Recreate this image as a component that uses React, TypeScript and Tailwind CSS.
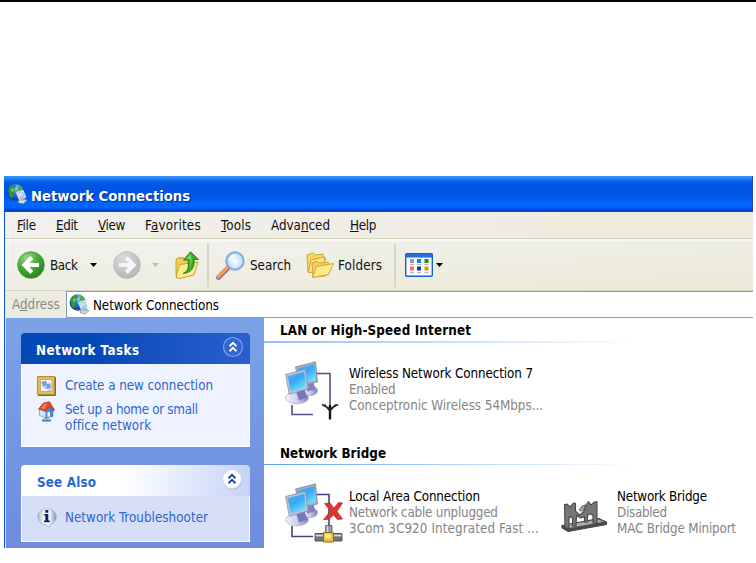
import React from "react";

function Globe({ className, id }: { className: string; id: string }) {
  return (
    <svg viewBox="0 0 21 21" className={className}>
      <defs>
        <radialGradient id={id} cx="0.6" cy="0.25" r="0.85">
          <stop offset="0" stopColor="#9fd4fa" />
          <stop offset="0.45" stopColor="#2c6fd2" />
          <stop offset="1" stopColor="#0a2c86" />
        </radialGradient>
      </defs>
      <circle cx="8.800" cy="8.500" r="8.200" fill={`url(#${id})`} />
      <path d="M1.500 5 4 1.800 8 .8l1.500 2L7 4.500 7.500 7 5.500 8.500 6.500 11 5 14.500 2.500 12z" fill="#2f9e2c" />
      <path d="M11 1.500l3.500 1.800L16.500 7l-2.500 1.500L11.500 7l-1-2.500z" fill="#46b238" />
      <path d="M4 5.500l2-1 .5 2L5 8z" fill="#8ee06b" />
      <path d="M9.500 8.500 16 6.500 18.800 13 12.500 16z" fill="#a5c8ee" stroke="#e3edf8" strokeWidth="1" />
      <path d="M11 9.800l4-1.300 1 2.500-4 2z" fill="#cfe5fa" />
      <path d="M11 17l5-2.500 4 2-3.500 3.300-5-.8z" fill="#cdd6e4" stroke="#6d7d99" strokeWidth=".6" />
      <path d="M14 16.500l4-2.500.5 2.500z" fill="#9aa9c2" />
    </svg>
  );
}

function RoundArrow({ forward }: { forward?: boolean }) {
  return (
    <svg viewBox="0 0 28 28" className="size-7 shrink-0">
      <defs>
        <radialGradient id={forward ? "fwd" : "back"} cx="0.35" cy="0.25" r="0.85">
          <stop offset="0" stopColor={forward ? "#dcdcdc" : "#9ed889"} />
          <stop offset="0.45" stopColor={forward ? "#c9c9c9" : "#4cae38"} />
          <stop offset="1" stopColor={forward ? "#b3b3b3" : "#1d7a14"} />
        </radialGradient>
      </defs>
      <circle cx="14" cy="14" r="13.300" fill={forward ? "url(#fwd)" : "url(#back)"} stroke={forward ? "#b8b8b4" : "#4c9a3e"} strokeWidth=".8" />
      <path
        d={forward ? "M6 14h14M13.200 6.500l7.300 7.500-7.300 7.500" : "M22 14H8M14.800 6.500 7.500 14l7.300 7.500"}
        fill="none"
        stroke={forward ? "#f6f6f6" : "#fff"}
        strokeWidth="4"
      />
    </svg>
  );
}

function Caret({ className }: { className: string }) {
  return (
    <svg viewBox="0 0 7 4" className={`h-1 w-[7px] shrink-0 ${className}`}>
      <path d="M0 0h7L3.500 4z" fill="currentColor" />
    </svg>
  );
}

function UpFolder() {
  return (
    <svg viewBox="0 0 24 28" className="h-7 w-6 shrink-0">
      <path d="M1 9l1.500-2 6-.5 1.500 2h8v15H1z" fill="#f1cf55" stroke="#c99d2a" />
      <path d="M1 26.500 4.500 13.500 23 11l-4 13-14 3.500z" fill="#fdeb93" stroke="#d0a12d" />
      <path d="M8 22.500c5-2 6-6 5-13.500H8.500L15.500.8 23.500 8.500H19c1 8-3 13.500-11 14z" fill="#3aad2b" stroke="#1c7a17" strokeWidth=".9" />
      <path d="M15.500 3 11 8h4c1 4 0 8-1.500 10.500C16 15 17 12 16.500 7z" fill="#7bd862" />
    </svg>
  );
}

function SearchGlass() {
  return (
    <svg viewBox="0 0 29 29" className="size-[29px] shrink-0">
      <defs>
        <radialGradient id="lens" cx="0.5" cy="0.5" r="0.55">
          <stop offset="0" stopColor="#fff" />
          <stop offset="0.6" stopColor="#cdeafc" />
          <stop offset="1" stopColor="#8cc8f5" />
        </radialGradient>
      </defs>
      <path d="M2.500 26.500 12 17" stroke="#957583" strokeWidth="4.800" strokeLinecap="round" />
      <path d="M2.300 25.600 11.500 16.500" stroke="#f59d55" strokeWidth="3" strokeLinecap="round" />
      <circle cx="19" cy="10" r="8.800" fill="url(#lens)" stroke="#86a6dc" strokeWidth="1.800" />
      <path d="M13.500 9c1-3 3-4.500 6-4.500" stroke="#fff" strokeWidth="1.500" fill="none" />
    </svg>
  );
}

function Folders() {
  return (
    <svg viewBox="0 0 28 26" className="h-[26px] w-7 shrink-0">
      <g stroke="#d3a433" strokeWidth="1" strokeLinejoin="round">
        <path d="M1 3 7 1l2 2 8-1v4l3 1-7 12-11 1.500z" fill="#f5d564" />
        <path d="M2.500 20.500 5 8l14-3-2 14z" fill="#fce98f" />
        <path d="M6 11l5-2 2 2 9-1 1 4-3 10-13 1z" fill="#f3cf58" />
        <path d="M6.500 25.500 10.500 14.500 27.500 11.500 22.500 22.500z" fill="#fdea8c" />
      </g>
    </svg>
  );
}

function ViewsIcon() {
  return (
    <svg viewBox="0 0 28 24" className="h-6 w-7 shrink-0">
      <rect x=".7" y=".7" width="26.600" height="22.600" rx="1" fill="#fbfcff" stroke="#1763c9" strokeWidth="1.400" />
      <path d="M1 1h26v3.500H1z" fill="#1c6fe0" />
      <path d="M5 6h4v4H5z" fill="#9b8fd0" />
      <path d="M12 6h4v4h-4z" fill="#1683e0" />
      <path d="M19.500 6h4v4h-4z" fill="#14980f" />
      <path d="M5 13.500h4v4H5z" fill="#ff7345" />
      <path d="M12 13.500h4v4h-4z" fill="#0a3aa8" />
      <path d="M19.500 13.500h4v4h-4z" fill="#d19a05" />
      <path d="M5 11.500h4m3 0h4m3.500 0h4M5 19.500h4m3 0h4m3.500 0h4" stroke="#b5b5b5" />
    </svg>
  );
}

function Chevrons({ light }: { light?: boolean }) {
  return (
    <svg viewBox="0 0 22 22" className="mb-[3px] size-[22px] shrink-0">
      {light && <circle cx="11.500" cy="11.800" r="9.800" fill="#8f9fce" opacity=".6" />}
      <circle cx="11" cy="11" r="9.500" fill={light ? "#fff" : "#3566cd"} stroke={light ? "#d5daec" : "#7ba3ea"} strokeWidth="1.200" />
      <path d="M7.500 10.200 11 6.800l3.500 3.400M7.500 15.200 11 11.800l3.500 3.400" fill="none" stroke={light ? "#1b45a5" : "#fff"} strokeWidth="1.900" />
    </svg>
  );
}

function NewConnectionIcon() {
  return (
    <svg viewBox="0 0 19 20" className="h-5 w-[19px] shrink-0">
      <path d="M.5.5h17v18H.5z" fill="#e3bb55" stroke="#b08c3f" />
      <path d="M18.500 1v18.500H1" stroke="#8a6a2c" fill="none" />
      <path d="M3.500 3.500h11.500v12H3.500z" fill="#f5f8ff" stroke="#d3ad55" />
      <path d="M4.800 6l4-1.300 1.200 4.500-4 1.300zM9 8.500l4-1 1 4.500-4 1z" fill="#5aa9ea" stroke="#93a9d0" strokeWidth=".7" />
      <path d="M6 12l3.500-1v2zM10 14.500l3.500-1V15z" fill="#9fb0d2" />
    </svg>
  );
}

function HomeIcon() {
  return (
    <svg viewBox="0 0 17 21" className="h-[21px] w-[17px] shrink-0">
      <path d="M1.500 8.500 9 4l6 5v6.500L8 17l-6.500-2.500z" fill="#d5e5f8" stroke="#7d9ccc" strokeWidth=".8" />
      <path d="M7.500 9.500 11.500 5l3.500 4.500v6L7.500 17z" fill="#4389d8" />
      <path d="M9.500 11h2.500v4.800H9.500z" fill="#f2f7ff" />
      <path d="M.5 8 5.500 2 11.500.8 16.500 9 15 10 11.500 5 7.500 10.500z" fill="#d8502c" stroke="#933020" strokeWidth=".7" />
      <path d="M3 7 6.500 3l3-.8L6.500 8z" fill="#f0805c" />
      <path d="M8 16.500v2.500M4 19.500h9" stroke="#697582" strokeWidth="2" />
      <path d="M6 18h5" stroke="#a4afb8" strokeWidth="2" />
    </svg>
  );
}

function InfoIcon() {
  return (
    <svg viewBox="0 0 20 20" className="size-5 shrink-0">
      <defs>
        <linearGradient id="bubble" x1="0" x2="1">
          <stop offset="0" stopColor="#a8bbd2" />
          <stop offset=".4" stopColor="#fff" />
          <stop offset=".65" stopColor="#eef5fb" />
          <stop offset="1" stopColor="#6f97bd" />
        </linearGradient>
      </defs>
      <path d="M10 .8c5.500 0 9.200 3.500 9.200 8 0 3.800-2.700 6.700-6.200 7.700l-.8 3-3.200-2.800C4 16.500.8 13 .8 8.800c0-4.500 3.700-8 9.200-8z" fill="url(#bubble)" stroke="#9db2c9" strokeWidth=".8" />
      <path d="M8.300 2h3v2.700h-3zM7.300 6h4v6.500h1.500v1.800H7v-1.800h1.300V7.800h-1z" fill="#15206e" />
    </svg>
  );
}

function Monitors({ id }: { id: string }) {
  return (
    <g>
      <defs>
        <linearGradient id={`${id}s`} x1="0" y1="0" x2=".6" y2="1">
          <stop offset="0" stopColor="#5ba8ee" />
          <stop offset=".5" stopColor="#35aaf8" />
          <stop offset="1" stopColor="#6be0ff" />
        </linearGradient>
        <linearGradient id={`${id}b`} x1="0" x2="1">
          <stop offset="0" stopColor="#f3f3fb" />
          <stop offset=".5" stopColor="#cfcfea" />
          <stop offset="1" stopColor="#7f7ebb" />
        </linearGradient>
      </defs>
      <ellipse cx="24.500" cy="29.500" rx="8" ry="5.300" fill={`url(#${id}b)`} stroke="#9c9bc8" strokeWidth=".6" />
      <path d="M21 22l7.500-1.500 1.500 8-8 2z" fill="#8080c2" />
      <path d="M10.500 6 30.500.8l2 20.200L15 25z" fill="#a9acc0" stroke="#8286a0" strokeWidth=".8" />
      <path d="M13 7.500 29.300 3.200l1.300 16L16 22z" fill={`url(#${id}s)`} />
      <ellipse cx="12" cy="36.800" rx="11.500" ry="6" fill={`url(#${id}b)`} stroke="#a5a4cd" strokeWidth=".6" />
      <path d="M11 30l8.500-2 2.500 8.500-8 3z" fill="#7676bd" />
      <path d="M.6 13.500 20.500 8.300l2.700 19.400L4.300 33.300z" fill="#bdc1d4" stroke="#8a8eab" strokeWidth=".8" />
      <path d="M2.800 15.200 19.200 10.800l2 15.300L5.900 30.500z" fill={`url(#${id}s)`} />
    </g>
  );
}

function WirelessIcon() {
  return (
    <svg viewBox="0 0 54 60" className="h-[60px] w-[54px] shrink-0">
      <path d="M31 12.500h14V44M7 44v9.500h21" fill="none" stroke="#5d4a8c" strokeWidth="1.600" />
      <Monitors id="wl" />
      <path d="M45 44v14.500" stroke="#151515" strokeWidth="2.400" />
      <path d="M37 43.500l8 4.500 8-4.500M39.500 43.500 45 50l5.500-6.500" fill="none" stroke="#222" strokeWidth="1.500" />
    </svg>
  );
}

function LanIcon() {
  return (
    <svg viewBox="0 0 58 60" className="h-[60px] w-[58px] shrink-0">
      <path d="M31 11.500h13V44M7 43v10.500h21" fill="none" stroke="#4d3c82" strokeWidth="1.600" />
      <Monitors id="lan" />
      <path d="M40.500 42.500h6.500v10h-6.500z" fill="#8e9aa0" stroke="#444c50" strokeWidth=".7" />
      <path d="M42.500 43v8" stroke="#d3dadd" strokeWidth="1.500" />
      <path d="M30 50.500h27V58H30z" fill="#6f797d" stroke="#33393b" strokeWidth=".8" />
      <path d="M30.500 52.500h26" stroke="#d3dadd" strokeWidth="1.800" />
      <path d="M38.500 49.500h10v9.500h-10z" fill="#f2bc35" stroke="#94701b" />
      <path d="M40 51h6v4.500h-6z" fill="#ffe68a" />
      <path d="M39.500 20.500 45 20l4 5 4.500-5.500 4 .5-5.500 8.500 5.500 7.500-5 .5-4-4.500-5 4.500h-5l7-8.500z" fill="#dd3631" stroke="#b9262a" strokeWidth=".7" />
    </svg>
  );
}

function BridgeIcon() {
  return (
    <svg viewBox="0 0 46 32" className="h-8 w-[46px] shrink-0">
      <path d="M.8 24.500 38 17.500l7.500 3.500v2.500L7 30.500l-6-3.500z" fill="#4a4a4a" stroke="#444" />
      <path d="M3 24.500 37.500 18.500l5.500 2.200L8.500 27z" fill="#acacac" />
      <path d="M3.500 3.500 6 3l3 3 3.500-4 2 .5V10l4 4 4-3 2.500-7L27.500.8 30 4l4-3.200h2V22h-4v-7.500l-3-2-2.500 2V21h-3v-5l-4 1-4-2.500-.500 10.500h-3.500V17l-2-1.500-1.500 1.500V27h-4z" fill="#777" stroke="#474747" strokeWidth="1.100" />
      <path d="M18 9l3-4 3-1-1 4c-1 2-3 3-5 1z" fill="#a5a5a5" stroke="#555" strokeWidth=".8" />
    </svg>
  );
}

function GroupHeading({ title, className, rule }: { title: string; className: string; rule: string }) {
  return (
    <div>
      <h2 className={`pl-4 font-bold text-black ${className}`}>{title}</h2>
      <div className={`w-[372px] bg-linear-to-r to-white ${rule}`} />
    </div>
  );
}

function Connection({ lines, tracking }: { lines: string[]; tracking: string[] }) {
  return (
    <div className="flex flex-col leading-4 text-[#858585]">
      <span className={`text-black ${tracking[0]}`}>{lines[0]}</span>
      <span className={tracking[1]}>{lines[1]}</span>
      <span className={tracking[2]}>{lines[2]}</span>
    </div>
  );
}

export default function App() {
  return (
    <div className="h-[563px] w-[756px] overflow-hidden border-t-2 border-black bg-white pt-[174px] pl-1 font-['DejaVu_Sans_Condensed','DejaVu_Sans',sans-serif] text-[13.3px] leading-4 whitespace-nowrap text-[#111]">
      <div className="flex h-[372px] w-[749px] flex-col">
        <header className="flex h-9 shrink-0 items-center gap-[3px] border-r border-[#1c47c0] bg-[linear-gradient(#3b93fb_0%,#2484f8_7%,#0560ea_15%,#0153e0_28%,#0054e6_55%,#0066ff_75%,#0064fa_88%,#0144d4_94%,#0d49d0_100%)] pl-[3px]">
          <Globe id="gt" className="size-[21px] shrink-0" />
          <h1 className="pt-1 text-[14.7px] font-bold text-white [text-shadow:1px_1px_1px_#0a2a80]">Network Connections</h1>
        </header>

        <div className="flex min-h-0 grow flex-col border-l border-[#0a55e0]">
          <nav className="flex h-[27px] shrink-0 items-center border-b border-[#d5d1bb] bg-linear-to-r from-[#f0f0ee] to-[#edebdd] pt-0.5 pl-3">
            <span className="w-[39px] tracking-[-0.31px]"><u>F</u>ile</span>
            <span className="w-[42px] tracking-[-0.39px]"><u>E</u>dit</span>
            <span className="w-[47px] tracking-[-0.4px]"><u>V</u>iew</span>
            <span className="w-[76px] tracking-[0.22px]">F<u>a</u>vorites</span>
            <span className="w-[50px] tracking-[0.19px]"><u>T</u>ools</span>
            <span className="w-[79px]">Adva<u>n</u>ced</span>
            <span className="tracking-[-0.35px]"><u>H</u>elp</span>
          </nav>

          <div className="flex h-[52px] shrink-0 items-center border-t-2 border-b border-t-[#f8f7f2] border-b-[#d8d5c4] bg-linear-to-br from-[#f2f2ef] to-[#ebe9d6] pb-px pl-3">
            <RoundArrow />
            <span className="ml-[5px] w-10 pt-px tracking-[-0.35px]">Back</span>
            <Caret className="text-black" />
            <span className="w-4" />
            <RoundArrow forward />
            <Caret className="ml-[11px] text-[#bdbdb6]" />
            <span className="w-4" />
            <UpFolder />
            <span className="mr-[7px] ml-[8px] h-[43px] w-0.5 bg-[#d6d3c3]" />
            <SearchGlass />
            <span className="ml-[5px] w-14 pt-px">Search</span>
            <Folders />
            <span className="ml-1 w-[56px] pt-px tracking-[0.14px]">Folders</span>
            <span className="mr-[9px] h-[43px] w-0.5 bg-[#d6d3c3]" />
            <ViewsIcon />
            <Caret className="ml-[3px] text-black" />
          </div>

          <div className="flex h-[27px] shrink-0 bg-[#ecebdf] text-black">
            <span className="w-[61px] pt-1.5 pl-[7px] text-[#8e8c80]">A<u>d</u>dress</span>
            <div className="flex grow items-center border border-r-0 border-[#7f9db9] bg-white pl-0.5">
              <Globe id="ga" className="mb-px size-[21px] shrink-0" />
              <span className="ml-[3px] pt-0.5 tracking-[-0.09px]">Network Connections</span>
            </div>
          </div>

          <main className="flex min-h-0 grow">
            <aside className="flex w-[259px] shrink-0 flex-col gap-[18px] border-l border-[#dbe6fb] bg-linear-to-b from-[#7ba2e7] to-[#6f8cde] pt-[15px] pl-[15px] text-[#2e66d0]">
              <section className="h-[114px] w-[229px] overflow-hidden rounded-t-[4px]">
                <div className="flex h-[31px] items-center justify-between bg-linear-to-r from-[#0249b5] from-30% to-[#2a5fcf] pr-[6px] pl-[15px]">
                  <h2 className="pt-1 font-bold tracking-[0.43px] text-white">Network Tasks</h2>
                  <Chevrons />
                </div>
                <div className="flex h-[83px] flex-col border border-t-0 border-white bg-[#eff3ff] pt-3 pl-[15px]">
                  <div className="flex h-[25px] gap-[9px]">
                    <NewConnectionIcon />
                    <span className="pt-0.5 tracking-[-0.05px]">Create a new connection</span>
                  </div>
                  <div className="flex gap-[10px] pl-px">
                    <HomeIcon />
                    <p className="pt-px tracking-[-0.29px]">
                      Set up a home or small
                      <br />
                      <span className="tracking-[0.06px]">office network</span>
                    </p>
                  </div>
                </div>
              </section>
              <section className="h-[77px] w-[229px] overflow-hidden rounded-t-[4px]">
                <div className="flex h-[31px] items-center justify-between bg-linear-to-r from-white from-45% to-[#c6d3f7] pr-[7px] pl-4">
                  <h2 className="pt-1 font-bold tracking-[0.18px]">See Also</h2>
                  <Chevrons light />
                </div>
                <div className="flex h-[46px] gap-2 border border-t-0 border-white bg-[#d6dff7] pt-3 pl-[15px]">
                  <InfoIcon />
                  <span className="pt-0.5 tracking-[0.03px]">Network Troubleshooter</span>
                </div>
              </section>
            </aside>

            <section className="grow bg-white">
              <GroupHeading title="LAN or High-Speed Internet" className="pt-[5px] pb-0.5 tracking-[0.17px]" rule="h-0.5 from-[#8fc0fb]" />
              <div className="flex h-[103px] gap-[10px] pt-[18px] pl-[21px]">
                <WirelessIcon />
                <div className="pt-[5px]">
                  <Connection
                    lines={["Wireless Network Connection 7", "Enabled", "Conceptronic Wireless 54Mbps..."]}
                    tracking={["tracking-[-0.09px]", "tracking-[-0.3px]", "tracking-[-0.03px]"]}
                  />
                </div>
              </div>
              <GroupHeading title="Network Bridge" className="pb-0.5 tracking-[0.04px]" rule="h-px from-[#5aa0f8]" />
              <div className="flex pt-[18px] pl-[21px]">
                <LanIcon />
                <div className="ml-[6px] w-[212px] pt-[6px]">
                  <Connection
                    lines={["Local Area Connection", "Network cable unplugged", "3Com 3C920 Integrated Fast ..."]}
                    tracking={["tracking-[-0.14px]", "tracking-[-0.21px]", "tracking-[0.1px]"]}
                  />
                </div>
                <div className="w-[56px] pt-[18px]">
                  <BridgeIcon />
                </div>
                <div className="pt-[6px]">
                  <Connection
                    lines={["Network Bridge", "Disabled", "MAC Bridge Miniport"]}
                    tracking={["tracking-[-0.21px]", "tracking-[-0.28px]", "tracking-[-0.18px]"]}
                  />
                </div>
              </div>
            </section>
          </main>
        </div>
      </div>
    </div>
  );
}
